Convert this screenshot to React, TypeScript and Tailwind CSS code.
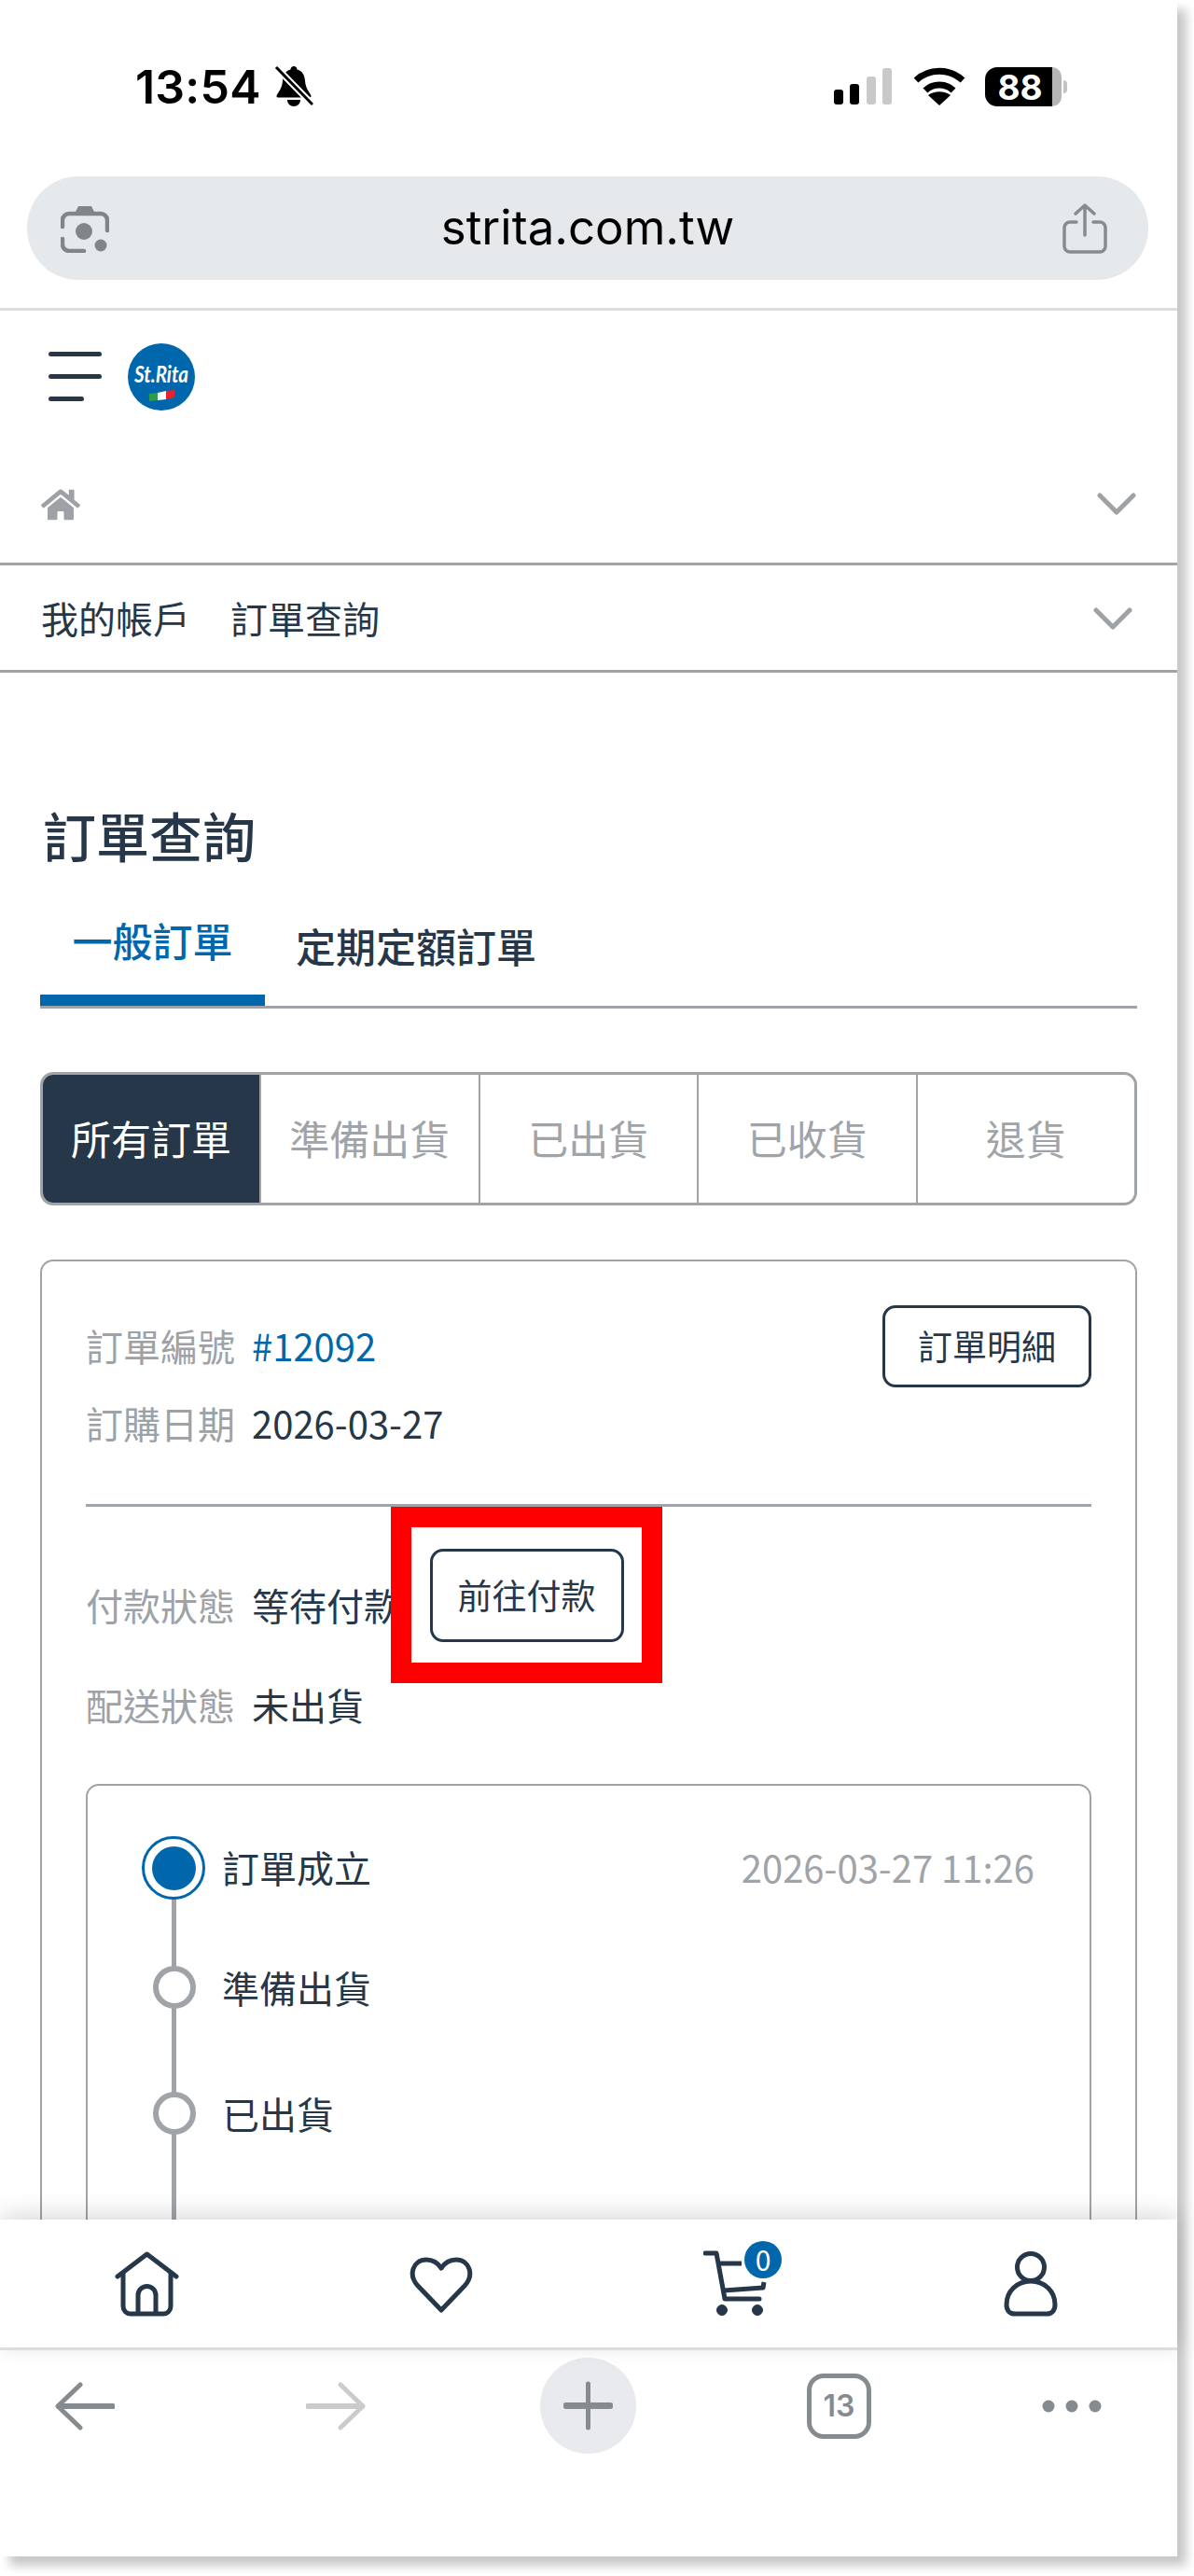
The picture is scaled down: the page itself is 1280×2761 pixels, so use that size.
import React from "react";
import { FaHome } from "react-icons/fa";

const NAVY = "#253748";
const GREY = "#858b8f";

function Chevron() {
  return (
    <svg width="42" height="26" viewBox="0 0 42 26" fill="none" stroke="#9ea2a6" strokeWidth="5" strokeLinecap="round" strokeLinejoin="round">
      <polyline points="3,3 21,21 39,3" />
    </svg>
  );
}

function StatusBar() {
  return (
    <div className="h-[189px] pl-[145px] pr-[118px] pt-[66px] flex items-start justify-between">
      <div className="flex items-center gap-[14px] h-[54px]">
        <span className="text-[50px] font-semibold leading-none text-black tracking-[0.2px] font-['Inter',sans-serif]">13:54</span>
        <svg width="42" height="46" viewBox="0 0 42 46">
          <path d="M21 1c2 0 3.500 1.500 3.500 3.500 6 1.500 8 6.500 8.500 12 .5 7 3 10 6 15 1 1.500 .5 3-1 3H4c-1.500 0-2-1.500-1-3 3-5 5.500-8 6-15 .5-5.500 2.500-10.500 8.500-12C17.500 2.500 19 1 21 1z" fill="#000" />
          <path d="M14 37h14c0 4-3 7-7 7s-7-3-7-7z" fill="#000" />
          <line x1="2" y1="2" x2="41" y2="42" stroke="#fff" strokeWidth="7" />
          <line x1="2" y1="2" x2="41" y2="42" stroke="#000" strokeWidth="3" />
        </svg>
      </div>
      <div className="flex items-center h-[54px] gap-[21px]">
        <svg width="64" height="40" viewBox="0 0 64 40">
          <rect x="0" y="23" width="10" height="16" rx="3" fill="#000" />
          <rect x="17" y="17" width="10" height="22" rx="3" fill="#000" />
          <rect x="35" y="9" width="10" height="30" rx="3" fill="#c9c9c9" />
          <rect x="52" y="0" width="10" height="39" rx="3" fill="#c9c9c9" />
        </svg>
        <svg width="56" height="42" viewBox="0 0 56 42" fill="none" stroke="#000" strokeWidth="7">
          <path d="M3 14C17 1 39 1 53 14" />
          <path d="M13 25C21 17 35 17 43 25" />
          <path d="M28 41 L16 30 C23 25 33 25 40 30 Z" fill="#000" stroke="none" />
        </svg>
        <div className="flex items-center">
          <div className="w-[72px] h-[42px] rounded-l-[13px] bg-black flex items-center justify-center">
            <span className="text-white text-[37px] font-bold leading-none font-['Inter',sans-serif] pl-[3px]">88</span>
          </div>
          <div className="w-[10px] h-[42px] rounded-r-[10px] bg-[#b5b5b5]" />
          <div className="ml-[2px] w-[4px] h-[14px] rounded-r-[4px] bg-[#c4c4c4]" />
        </div>
      </div>
    </div>
  );
}

function UrlBar() {
  return (
    <div className="mx-[29px] w-[1202px] h-[111px] rounded-[55px] bg-[#e6e9ec] flex items-center justify-between pl-[36px] pr-[44px]">
      <svg width="52" height="52" viewBox="0 0 52 52" fill="none" stroke="#7f8588" strokeWidth="4.500" strokeLinecap="round">
        <path d="M15 10l4-8h14l4 8z" fill="#7f8588" stroke="none" />
        <path d="M2 24V17a7 7 0 0 1 7-7h34a7 7 0 0 1 7 7v11" />
        <path d="M2 37v6a7 7 0 0 0 7 7h16" />
        <circle cx="25" cy="29" r="9" fill="#7f8588" stroke="none" />
        <circle cx="43" cy="44" r="6.500" fill="#7f8588" stroke="none" />
      </svg>
      <span className="text-[51px] leading-none text-black font-['Inter',sans-serif] -mt-[3px] ml-[6px]">strita.com.tw</span>
      <svg width="48" height="54" viewBox="0 0 48 54" className="ml-[2px]" fill="none" stroke={GREY} strokeWidth="3.500" strokeLinecap="round" strokeLinejoin="round">
        <path d="M15 20H8a6 6 0 0 0-6 6v20a6 6 0 0 0 6 6h32a6 6 0 0 0 6-6V26a6 6 0 0 0-6-6h-7" />
        <path d="M24 34V2M14 11l10-9 10 9" />
      </svg>
    </div>
  );
}

function Logo() {
  return (
    <svg width="72" height="72" viewBox="0 0 72 72" className="overflow-visible">
      <circle cx="36" cy="36" r="36" fill="#0067ac" />
      <text x="36" y="42" textAnchor="middle" fill="#fff" fontSize="24" fontWeight="700" fontStyle="italic" textLength="58" lengthAdjust="spacingAndGlyphs" fontFamily="'Lato','Liberation Sans',sans-serif">St.Rita</text>
      <path d="M23 62l9-1v-8l-9 1z" fill="#2f9c4a" />
      <path d="M32 61l9-1v-9l-9 2z" fill="#fff" />
      <path d="M41 60l9-2v-8l-9 1z" fill="#e5232c" />
    </svg>
  );
}

function StepDot({ active }: { active?: boolean }) {
  if (active) {
    return (
      <div className="w-[68px] h-[68px] rounded-full border-[3px] border-[#0067ac] bg-white flex items-center justify-center">
        <div className="w-[47px] h-[47px] rounded-full bg-[#0067ac]" />
      </div>
    );
  }
  return <div className="w-[46px] h-[46px] rounded-full border-[6px] border-[#a0a4a8] bg-white" />;
}

function InfoRow({ label, children, className }: { label: string; children: React.ReactNode; className?: string }) {
  return (
    <div className={"flex items-center gap-[20px] text-[40px] leading-[56px] " + (className ?? "")}>
      <span className="text-[#9ea2a6] w-[158px] shrink-0 whitespace-nowrap">{label}</span>
      {children}
    </div>
  );
}

function Filters() {
  const items = ["準備出貨", "已出貨", "已收貨", "退貨"];
  return (
    <div className="mx-[43px] mt-[68px] h-[143px] border-[3px] border-[#a0a4a8] rounded-[14px] overflow-hidden flex text-[43px]">
      <div className="w-[232px] bg-[#253748] text-white flex items-center justify-center pb-[2px]">所有訂單</div>
      {items.map((t) => (
        <div key={t} className="flex-1 border-l-[2px] border-[#a0a4a8] text-[#a0a4a8] flex items-center justify-center pb-[2px]">
          {t}
        </div>
      ))}
    </div>
  );
}

function OrderCard() {
  return (
    <div className="mx-[43px] mt-[58px] border-[2px] border-[#a0a4a8] rounded-[14px] px-[47px] pt-[47px] text-[#253748]">
      <div className="flex items-start justify-between h-[165px]">
        <div className="pt-[15px] flex flex-col gap-[27px]">
          <InfoRow label="訂單編號"><span className="text-[#0067ac]">#12092</span></InfoRow>
          <InfoRow label="訂購日期"><span>2026-03-27</span></InfoRow>
        </div>
        <div className="w-[224px] h-[88px] border-[3px] border-[#253748] rounded-[14px] flex items-center justify-center text-[37px] bg-white">訂單明細</div>
      </div>
      <div className="h-[3px] bg-[#a0a4a8] mt-[48px]" />
      <div className="relative h-[297px]">
        <InfoRow label="付款狀態" className="absolute left-0 top-[77px]"><span>等待付款</span></InfoRow>
        <div className="absolute left-[327px] top-[0px] w-[291px] h-[189px] border-[22px] border-[#ff0000] bg-white flex items-center justify-center">
          <div className="w-[208px] h-[100px] border-[3px] border-[#253748] rounded-[14px] flex items-center justify-center text-[37px]">前往付款</div>
        </div>
        <InfoRow label="配送狀態" className="absolute left-0 top-[184px]"><span>未出貨</span></InfoRow>
      </div>
      <div className="border-[2px] border-[#a0a4a8] rounded-[14px] h-[600px] pl-[58px] pr-[59px] pt-[54px]">
        <div className="relative">
          <div className="absolute left-[32px] top-[60px] h-[500px] w-[5px] bg-[#a0a4a8]" />
          <div className="relative flex items-center h-[68px]">
            <StepDot active />
            <span className="ml-[18px] text-[40px] -mt-[3px]">訂單成立</span>
            <span className="ml-auto text-[40px] text-[#a0a4a8] -mt-[3px]">2026-03-27 11:26</span>
          </div>
          <div className="relative flex items-center h-[46px] mt-[71px] pl-[12px]">
            <StepDot />
            <span className="ml-[28px] text-[40px]">準備出貨</span>
          </div>
          <div className="relative flex items-center h-[46px] mt-[89px] pl-[12px]">
            <StepDot />
            <span className="ml-[28px] text-[40px]">已出貨</span>
          </div>
        </div>
      </div>
    </div>
  );
}

function SiteNav() {
  return (
    <div className="relative z-10 h-[140px] shrink-0 bg-white flex items-start pl-[123px] pt-[23px] shadow-[0_-6px_24px_rgba(0,0,0,0.14)] border-b-[3px] border-[#dddddd]">
      <svg width="69" height="70" viewBox="0 0 69 70" className="mt-[11px]" fill="none" stroke={NAVY} strokeWidth="5" strokeLinecap="round" strokeLinejoin="round">
        <path d="M3 27 34.500 3 66 27" />
        <path d="M9 23v36a8 8 0 0 0 8 8h35a8 8 0 0 0 8-8V23" />
        <path d="M25 66V47a9.500 9.500 0 0 1 19 0v19" />
      </svg>
      <svg width="70" height="62" viewBox="0 0 70 62" className="mt-[17px] ml-[246px]" fill="none" stroke={NAVY} strokeWidth="5" strokeLinejoin="round">
        <path d="M35 57 10 31C-1 19 5 3 19 3c7 0 12 3 16 9 4-6 9-9 16-9 14 0 20 16 9 28z" />
      </svg>
      <div className="relative w-[84px] h-[82px] ml-[246px]">
        <svg width="84" height="82" viewBox="0 0 84 82" className="absolute left-0 top-0" fill={NAVY} stroke={NAVY} strokeLinecap="round" strokeLinejoin="round">
          <path d="M2 13h12l9 49h37" fill="none" strokeWidth="5" />
          <path d="M15 24h26" fill="none" strokeWidth="5" strokeLinecap="butt" />
          <path d="M22 53l42-3 1-6" fill="none" strokeWidth="5" strokeLinecap="butt" />
          <circle cx="20" cy="74" r="5.500" />
          <circle cx="58" cy="74" r="5.500" />
        </svg>
        <div className="absolute left-[44px] top-0 w-[40px] h-[40px] rounded-full bg-[#0067ac] text-white text-[30px] leading-[38px] text-center">0</div>
      </div>
      <svg width="58" height="70" viewBox="0 0 58 70" className="mt-[11px] ml-[238px]" fill="none" stroke={NAVY} strokeWidth="5" strokeLinejoin="round">
        <circle cx="29" cy="17" r="14.500" />
        <path d="M3 57c0-14 11-25 26-25s26 11 26 25c0 6-3 10-9 10H12c-6 0-9-4-9-10z" />
      </svg>
    </div>
  );
}

function BrowserBar() {
  return (
    <div className="relative h-[221px] shrink-0 bg-white flex items-start pl-[59px] pt-[8px]">
      <svg width="64" height="52" viewBox="0 0 64 52" className="mt-[26px]" fill="none" stroke={GREY} strokeWidth="5" strokeLinecap="round" strokeLinejoin="round">
        <path d="M27 3 3 26l24 23" />
        <path d="M4 26h58" strokeWidth="6" />
      </svg>
      <svg width="64" height="52" viewBox="0 0 64 52" className="mt-[26px] ml-[205px]" fill="none" stroke="#c9cbcc" strokeWidth="5" strokeLinecap="round" strokeLinejoin="round">
        <path d="M37 3l24 23-24 23" />
        <path d="M60 26H2" strokeWidth="6" />
      </svg>
      <div className="ml-[187px] w-[103px] h-[103px] rounded-full bg-[#e9eaed] flex items-center justify-center">
        <svg width="53" height="53" viewBox="0 0 53 53" stroke={GREY} strokeLinecap="round">
          <path d="M26.500 3v47" strokeWidth="5" />
          <path d="M3 26.500h47" strokeWidth="7" />
        </svg>
      </div>
      <div className="ml-[183px] mt-[17px] w-[69px] h-[70px] rounded-[18px] border-[5px] border-[#858b8f] flex items-center justify-center text-[32px] font-semibold leading-none text-[#858b8f] font-['Inter',sans-serif]">13</div>
      <svg width="66" height="14" viewBox="0 0 66 14" className="mt-[45px] ml-[183px]" fill={GREY}>
        <circle cx="7" cy="7" r="6.500" />
        <circle cx="32" cy="7" r="6.500" />
        <circle cx="57" cy="7" r="6.500" />
      </svg>
    </div>
  );
}

export default function App() {
  return (
    <div className="w-[1280px] h-[2761px] bg-white overflow-hidden font-['Noto_Sans_CJK_TC','Noto_Sans',sans-serif]">
      <div className="w-[1262px] h-[2740px] bg-white flex flex-col shadow-[10px_10px_10px_rgba(0,0,0,0.22)]">
        <div className="flex-1 min-h-0 overflow-hidden">
          <StatusBar />
          <UrlBar />
          <div className="mt-[30px] h-[3px] bg-[#dddddd]" />
          <div className="h-[141px] pl-[52px] flex items-center gap-[28px]">
            <div className="flex flex-col gap-[19px] w-[57px]">
              <div className="h-[5px] rounded-full bg-[#253748]" />
              <div className="h-[5px] rounded-full bg-[#253748]" />
              <div className="h-[5px] w-[38px] rounded-full bg-[#253748]" />
            </div>
            <Logo />
          </div>
          <div className="h-[132px] pl-[44px] pr-[44px] flex items-center justify-between border-b-[3px] border-[#a0a4a8]">
            <FaHome className="text-[#9ea2a6] text-[42px] mt-[5px]" />
            <div className="mt-[4px]"><Chevron /></div>
          </div>
          <div className="h-[115px] pl-[44px] pr-[48px] flex items-center justify-between border-b-[3px] border-[#a0a4a8] text-[40px] text-[#253748]">
            <div className="flex gap-[43px]">
              <span>我的帳戶</span>
              <span>訂單查詢</span>
            </div>
            <div className="mt-[3px]"><Chevron /></div>
          </div>
          <h1 className="ml-[46px] mt-[131px] text-[57px] leading-[84px] font-medium text-[#253748]">訂單查詢</h1>
          <div className="mx-[43px] mt-[11px] h-[134px] border-b-[3px] border-[#a0a4a8] flex items-stretch text-[43px] font-medium leading-[60px]">
            <div className="w-[241px] border-b-[12px] border-[#0067ac] text-[#0067ac] flex items-center justify-center">一般訂單</div>
            <div className="ml-[33px] text-[#253748] flex items-center">定期定額訂單</div>
          </div>
          <Filters />
          <OrderCard />
        </div>
        <SiteNav />
        <BrowserBar />
      </div>
    </div>
  );
}
